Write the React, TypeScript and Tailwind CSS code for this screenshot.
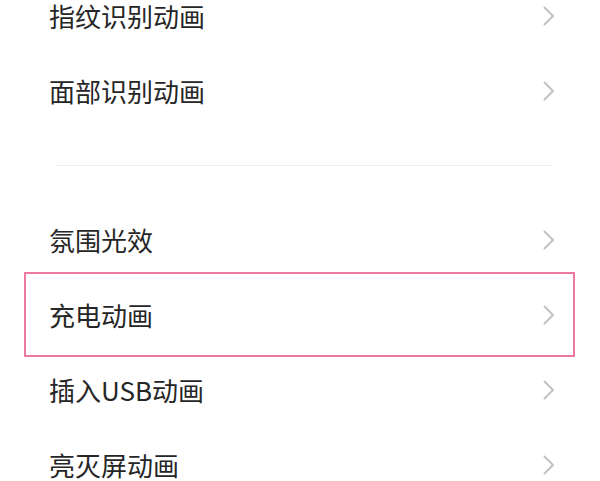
const font = { fontFamily: '"Noto Sans CJK SC", "Noto Sans", sans-serif' }

function Chevron() {
    return (
        <svg width="12" height="20" viewBox="0 0 12 20" fill="none" className="shrink-0">
            <path d="M1.5 1.5 L10 10 L1.5 18.5" stroke="#c2c2c2" strokeWidth="2" strokeLinecap="round" strokeLinejoin="round" />
        </svg>
    )
}

function Row({ label, highlight }: { label: string; highlight?: boolean }) {
    return (
        <div className="relative flex h-[75px] items-center justify-between pl-[49px] pr-[45px]">
            <span className="text-[26px] leading-none text-[#262626]">{label}</span>
            <Chevron />
            {highlight && (
                <div className="pointer-events-none absolute left-[24px] right-[25px] top-[-5px] bottom-[-5px] border-2 border-[#ec7a9e]" />
            )}
        </div>
    )
}

export default function App() {
    return (
        <div className="h-[481px] w-[600px] overflow-hidden bg-white" style={font}>
            <div className="-mt-[22px]">
                <Row label="指纹识别动画" />
                <Row label="面部识别动画" />
                {/* 分组分隔 */}
                <div className="flex h-[74px] items-center pl-[56px] pr-[48px]">
                    <div className="h-px w-full bg-[#efefef]" />
                </div>
                <Row label="氛围光效" />
                <Row label="充电动画" highlight />
                <Row label="插入USB动画" />
                <Row label="亮灭屏动画" />
            </div>
        </div>
    )
}
